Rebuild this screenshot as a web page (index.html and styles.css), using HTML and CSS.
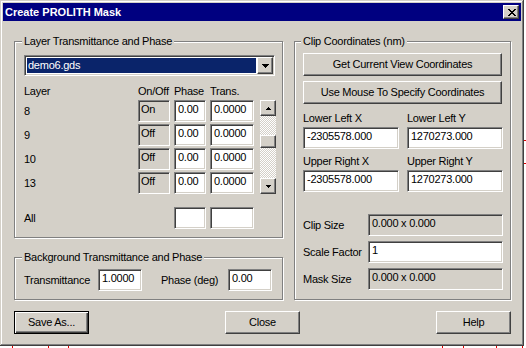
FILE: index.html
```html
<!DOCTYPE html>
<html lang="en">
<head>
  <meta charset="UTF-8">
  <title>Create PROLITH Mask</title>
  <link rel="stylesheet" href="styles.css">
</head>
<body>
  <div class="screen">
  <div class="window">
    <div class="titlebar">
      <span class="title">Create PROLITH Mask</span>
      <button class="title-close raised" aria-label="Close">
        <svg width="8" height="7" viewBox="0 0 8 7" shape-rendering="crispEdges"><path d="M0 0h2v1H0zM6 0h2v1H6zM1 1h2v1H1zM5 1h2v1H5zM2 2h4v1H2zM3 3h2v1H3zM2 4h4v1H2zM1 5h2v1H1zM5 5h2v1H5zM0 6h2v1H0zM6 6h2v1H6z"/></svg>
      </button>
    </div>

    <div class="client">
      <div class="columns">
        <div class="col-left">
          <fieldset class="group layers">
            <legend>Layer Transmittance and Phase</legend>
            <div class="combo sunken">
              <span class="combo-value">demo6.gds</span>
              <span class="combo-btn raised">
                <svg width="7" height="4" viewBox="0 0 7 4" shape-rendering="crispEdges"><path d="M0 0h7v1H0zM1 1h5v1H1zM2 2h3v1H2zM3 3h1v1H3z"/></svg>
              </span>
            </div>

            <div class="layer-grid">
              <span>Layer</span>
              <span>On/Off</span>
              <span>Phase</span>
              <span>Trans.</span>
              <span></span>

              <div class="scrollbar">
                <span class="sb-btn raised">
                  <svg width="5" height="3" viewBox="0 0 5 3" shape-rendering="crispEdges"><path d="M2 0h1v1H2zM1 1h3v1H1zM0 2h5v1H0z"/></svg>
                </span>
                <div class="sb-track"><div class="sb-thumb raised"></div></div>
                <span class="sb-btn raised">
                  <svg width="5" height="3" viewBox="0 0 5 3" shape-rendering="crispEdges"><path d="M0 0h5v1H0zM1 1h3v1H1zM2 2h1v1H2z"/></svg>
                </span>
              </div>

              <span class="row-label">8</span>
              <span class="field sunken readonly">On</span>
              <span class="field sunken">0.00</span>
              <span class="field sunken">0.0000</span>

              <span class="row-label">9</span>
              <span class="field sunken readonly">Off</span>
              <span class="field sunken">0.00</span>
              <span class="field sunken">0.0000</span>

              <span class="row-label">10</span>
              <span class="field sunken readonly">Off</span>
              <span class="field sunken">0.00</span>
              <span class="field sunken">0.0000</span>

              <span class="row-label">13</span>
              <span class="field sunken readonly">Off</span>
              <span class="field sunken">0.00</span>
              <span class="field sunken">0.0000</span>

              <span class="row-label all">All</span>
              <span class="all"></span>
              <span class="field sunken all"></span>
              <span class="field sunken all"></span>
            </div>
          </fieldset>

          <fieldset class="group background">
            <legend>Background Transmittance and Phase</legend>
            <div class="bg-row">
              <span class="bg-label">Transmittance</span>
              <span class="field sunken bg-field">1.0000</span>
              <span class="bg-label phase-label">Phase (deg)</span>
              <span class="field sunken bg-field">0.00</span>
            </div>
          </fieldset>
        </div>

        <fieldset class="group clip">
          <legend>Clip Coordinates (nm)</legend>
          <button class="btn raised wide">Get Current View Coordinates</button>
          <button class="btn raised wide">Use Mouse To Specify Coordinates</button>

          <div class="coord-grid">
            <div class="coord">
              <span>Lower Left X</span>
              <span class="field sunken">-2305578.000</span>
            </div>
            <div class="coord">
              <span>Lower Left Y</span>
              <span class="field sunken">1270273.000</span>
            </div>
            <div class="coord">
              <span>Upper Right X</span>
              <span class="field sunken">-2305578.000</span>
            </div>
            <div class="coord">
              <span>Upper Right Y</span>
              <span class="field sunken">1270273.000</span>
            </div>
          </div>

          <div class="size-grid">
            <span class="size-label">Clip Size</span>
            <span class="field sunken readonly">0.000 x 0.000</span>
            <span class="size-label">Scale Factor</span>
            <span class="field sunken">1</span>
            <span class="size-label">Mask Size</span>
            <span class="field sunken readonly">0.000 x 0.000</span>
          </div>
        </fieldset>
      </div>

      <div class="actions">
        <button class="btn default">Save As...</button>
        <button class="btn raised">Close</button>
        <button class="btn raised">Help</button>
      </div>
    </div>
  </div>
  <div class="ruler-v"></div>
  <div class="ruler-h"></div>
  </div>
</body>
</html>
```

FILE: styles.css
```css
html, body {
  margin: 0;
  padding: 0;
}
body {
  background: #fff;
  font-family: "Liberation Sans", Arial, sans-serif;
  font-size: 11px;
  line-height: 13px;
  letter-spacing: -0.25px;
  color: #000;
}
button {
  font: inherit;
  letter-spacing: inherit;
  color: inherit;
  margin: 0;
  cursor: default;
}

/* page behind the dialog, with the ruler marks peeking out */
.screen {
  display: grid;
  grid-template-columns: 524px 2px;
  grid-template-rows: 346px 2px;
}
.ruler-v {
  background:
    linear-gradient(#e00000, #e00000) 0 140px / 2px 1px no-repeat,
    linear-gradient(#e00000, #e00000) 0 163px / 2px 1px no-repeat;
}
.ruler-h {
  grid-column: 1 / span 2;
  background:
    linear-gradient(#e00000, #e00000) 12px 0 / 1px 2px no-repeat,
    linear-gradient(#e00000, #e00000) 48px 0 / 1px 2px no-repeat,
    linear-gradient(#e00000, #e00000) 68px 0 / 1px 2px no-repeat,
    linear-gradient(#e00000, #e00000) 442px 0 / 1px 2px no-repeat,
    linear-gradient(#e00000, #e00000) 463px 0 / 1px 2px no-repeat,
    linear-gradient(#e00000, #e00000) 496px 0 / 1px 2px no-repeat,
    linear-gradient(#e00000, #e00000) 522px 0 / 1px 2px no-repeat;
}

/* 3d edges */
.raised {
  background: #d4d0c8;
  border: 1px solid;
  border-color: #fff #404040 #404040 #fff;
  box-shadow: inset -1px -1px #808080;
  box-sizing: border-box;
}
.sunken {
  border: 1px solid;
  border-color: #808080 #fff #fff #808080;
  box-shadow: inset 1px 1px #404040, inset -1px -1px #d4d0c8;
  box-sizing: border-box;
}

.window {
  width: 524px;
  height: 346px;
  box-sizing: border-box;
  padding: 3px;
  background: #d4d0c8;
  box-shadow: inset -1px -1px #404040, inset 1px 1px #d4d0c8, inset -2px -2px #808080, inset 2px 2px #fff;
  display: flex;
  flex-direction: column;
}
.titlebar {
  height: 18px;
  flex: none;
  background: #000080;
  color: #fff;
  display: flex;
  align-items: center;
  padding: 0 2px;
}
.title {
  font-weight: bold;
  letter-spacing: 0;
}
.title-close {
  margin-left: auto;
  width: 16px;
  height: 14px;
  padding: 0 0 0 1px;
  display: flex;
  align-items: center;
  justify-content: center;
}
.title-close svg { fill: #000; }

.client {
  flex: 1;
  padding: 14px 10px 9px 11px;
  display: flex;
  flex-direction: column;
}
.columns {
  display: flex;
  gap: 11px;
}
.col-left {
  width: 269px;
  display: flex;
  flex-direction: column;
  gap: 13px;
}

/* group boxes */
.group {
  margin: 0;
  min-width: 0;
  box-sizing: border-box;
  border: 1px solid #808080;
  box-shadow: 1px 1px #fff, inset 1px 1px #fff;
}
.group legend {
  padding: 0 2px;
  margin-left: -2px;
  line-height: 13px;
  background: #d4d0c8;
}
.layers {
  padding: 7px 6px 8px 9px;
}
.background {
  padding: 5px 6px 8px 9px;
}
.clip {
  width: 217px;
  padding: 5px 7px 9px 8px;
  display: flex;
  flex-direction: column;
}

/* combo box */
.combo {
  width: 251px;
  height: 21px;
  padding: 1px;
  background: #fff;
  display: flex;
}
.combo-value {
  flex: 1;
  margin: 1px;
  padding-left: 1px;
  background: #0a246a;
  color: #fff;
  line-height: 15px;
}
.combo-btn {
  width: 16px;
  display: flex;
  align-items: center;
  justify-content: center;
}

/* layer table */
.layer-grid {
  margin-top: 9px;
  display: grid;
  grid-template-columns: 110px 32px 32px 44px 18px;
  grid-template-rows: 13px repeat(4, 22px) 9px 22px;
  column-gap: 4px;
  row-gap: 2px;
}
.row-label {
  line-height: 22px;
}
.layer-grid .all {
  grid-row: 7;
}
.field {
  display: block;
  height: 22px;
  background: #fff;
  padding: 1px 3px;
  line-height: 14px;
  white-space: nowrap;
  overflow: hidden;
}
.field.readonly {
  background: #d4d0c8;
}
.layer-grid .readonly {
  padding-left: 2px;
}

.scrollbar {
  grid-column: 5;
  grid-row: 2 / span 4;
  justify-self: end;
  width: 16px;
  display: flex;
  flex-direction: column;
}
.sb-btn {
  height: 16px;
  flex: none;
  display: flex;
  align-items: center;
  justify-content: center;
}
.sb-track {
  flex: 1;
  background: repeating-conic-gradient(#d4d0c8 0 25%, #fff 0 50%) 0 0 / 2px 2px;
}
.sb-thumb {
  height: 13px;
  margin-top: 19px;
}

/* background row */
.bg-row {
  display: flex;
  align-items: center;
}
.bg-label {
  width: 74px;
}
.phase-label {
  width: 67px;
  margin-left: 19px;
}
.bg-field {
  width: 44px;
}

/* clip coordinates */
.btn {
  height: 23px;
  padding: 0;
  text-align: center;
}
.wide {
  width: 199px;
}
.wide + .wide {
  margin-top: 5px;
}
.coord-grid {
  margin-top: 8px;
  display: grid;
  grid-template-columns: 96px 96px;
  column-gap: 8px;
  row-gap: 6px;
}
.coord {
  display: flex;
  flex-direction: column;
  gap: 2px;
}
.size-grid {
  margin-top: 22px;
  display: grid;
  grid-template-columns: 65px 135px;
  grid-auto-rows: 22px;
  row-gap: 5px;
  align-items: center;
}
.size-grid .field {
  padding-left: 3px;
}

/* dialog buttons */
.actions {
  margin-top: 11px;
  display: flex;
  justify-content: space-between;
}
.actions .btn {
  width: 75px;
}
.btn.default {
  background: #d4d0c8;
  border: 1px solid #000;
  box-shadow: inset 1px 1px #fff, inset -1px -1px #404040, inset -2px -2px #808080;
  box-sizing: border-box;
}
```
